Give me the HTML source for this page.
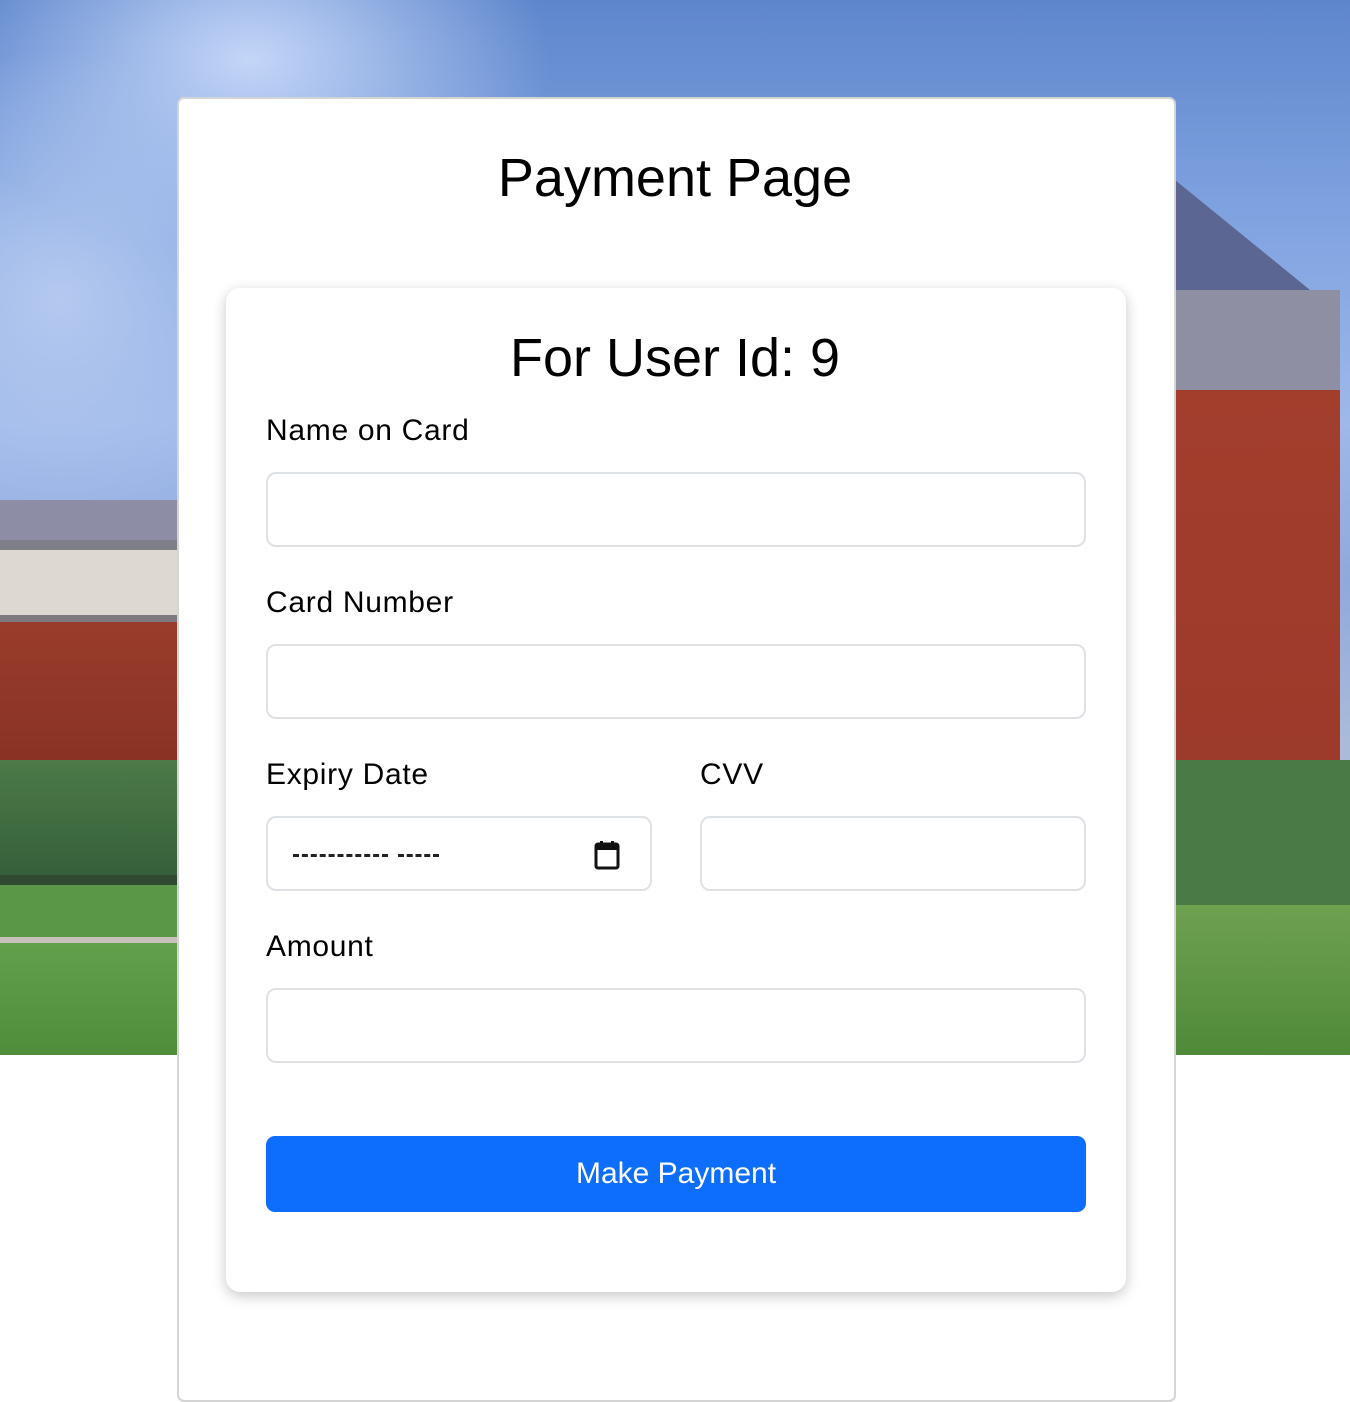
<!DOCTYPE html>
<html><head><meta charset="utf-8"><style>
*{box-sizing:border-box;margin:0;padding:0}
body{width:1350px;height:1402px;position:relative;background:#fff;font-family:"Liberation Sans",Arial,sans-serif;overflow:hidden;color:#000}
.bg{position:absolute;left:0;top:0;width:1350px;height:1055px;background:radial-gradient(ellipse 300px 200px at 250px 60px,#c4d6f8,transparent),radial-gradient(ellipse 250px 250px at 60px 300px,#b4c9ef,transparent),linear-gradient(180deg,#5e86cc 0%,#7fa2e0 20%,#9eb8ea 40%,#8fa9dc 55%,#a9bbd9 70%)}
.bldL{position:absolute;left:0;top:500px;width:177px;height:270px;background:linear-gradient(180deg,#8d8ea6 0,#8d8ea6 40px,#7f7f8a 40px,#7f7f8a 50px,#ded8d2 50px,#ded8d2 115px,#7e7a80 115px,#7e7a80 122px,#9a3c2c 122px,#883224 100%)}
.treeL{position:absolute;left:0;top:760px;width:177px;height:115px;background:linear-gradient(180deg,#4d7a48,#35603a)}
.grassL{position:absolute;left:0;top:875px;width:177px;height:180px;background:linear-gradient(180deg,#2f4a30 0,#2f4a30 10px,#5a9848 10px,#5a9848 62px,#c9c2bb 62px,#c9c2bb 68px,#63a04b 68px,#4f8d3a 100%)}
.tower{position:absolute;left:1175px;top:290px;width:165px;height:470px;background:linear-gradient(180deg,#8e8fa3 0,#8e8fa3 100px,#a33e2d 100px,#9c3a2b 100%)}
.roof{position:absolute;left:1175px;top:180px;width:0;height:0;border-left:0 solid transparent;border-right:135px solid transparent;border-bottom:110px solid #5b6692}
.treeR{position:absolute;left:1175px;top:760px;width:175px;height:150px;background:#4a7a45}
.grassR{position:absolute;left:1175px;top:905px;width:175px;height:150px;background:linear-gradient(180deg,#6ea150,#4f8a38)}
.outer{position:absolute;left:177px;top:97px;width:999px;height:1305px;background:#fff;border:2px solid #d4d4d4;border-radius:7px}
h1{position:absolute;left:0;right:0;top:146px;text-align:center;font-weight:400;font-size:54px;line-height:64px}
.inner{position:absolute;left:226px;top:288px;width:900px;height:1004px;background:#fff;border-radius:14px;box-shadow:0 4px 14px rgba(0,0,0,.22)}
h2{position:absolute;left:0;right:0;top:326px;text-align:center;font-weight:400;font-size:54px;line-height:64px}
.lbl{position:absolute;font-size:30px;line-height:34px;letter-spacing:0.7px}
.inp{position:absolute;height:75px;border:2px solid #dee2e6;border-radius:10px;background:#fff}
.btn{position:absolute;left:266px;top:1136px;width:820px;height:76px;background:#0d6efd;border-radius:9px;color:#fff;font-size:30px;text-align:center;line-height:76px}
.d{position:absolute;top:36px;height:0;border-top:3px solid #222}
</style></head><body>
<div class="bg"></div>
<div class="bldL"></div><div class="treeL"></div><div class="grassL"></div>
<div class="roof"></div><div class="tower"></div><div class="treeR"></div><div class="grassR"></div>
<div class="outer"></div>
<h1>Payment Page</h1>
<div class="inner"></div>
<h2>For User Id: 9</h2>
<div class="lbl" style="left:266px;top:414px">Name on Card</div>
<div class="inp" style="left:266px;top:472px;width:820px"></div>
<div class="lbl" style="left:266px;top:586px">Card Number</div>
<div class="inp" style="left:266px;top:644px;width:820px"></div>
<div class="lbl" style="left:266px;top:758px">Expiry Date</div>
<div class="lbl" style="left:700px;top:758px">CVV</div>
<div class="inp" style="left:266px;top:816px;width:386px">
<div style="position:absolute;left:25px;top:36px;width:95px;height:0;border-top:3px dashed #222"></div>
<div style="position:absolute;left:130px;top:36px;width:41px;height:0;border-top:3px dashed #222"></div>
<svg style="position:absolute;left:326px;top:22px" width="26" height="30" viewBox="0 0 26 30"><rect x="2" y="4" width="22" height="24" rx="2" fill="none" stroke="#111" stroke-width="3"/><rect x="2" y="4" width="22" height="6" fill="#111"/><rect x="6" y="1" width="3" height="5" fill="#111"/><rect x="17" y="1" width="3" height="5" fill="#111"/></svg>
</div>
<div class="inp" style="left:700px;top:816px;width:386px"></div>
<div class="lbl" style="left:266px;top:930px">Amount</div>
<div class="inp" style="left:266px;top:988px;width:820px"></div>
<div class="btn">Make Payment</div>
</body></html>
